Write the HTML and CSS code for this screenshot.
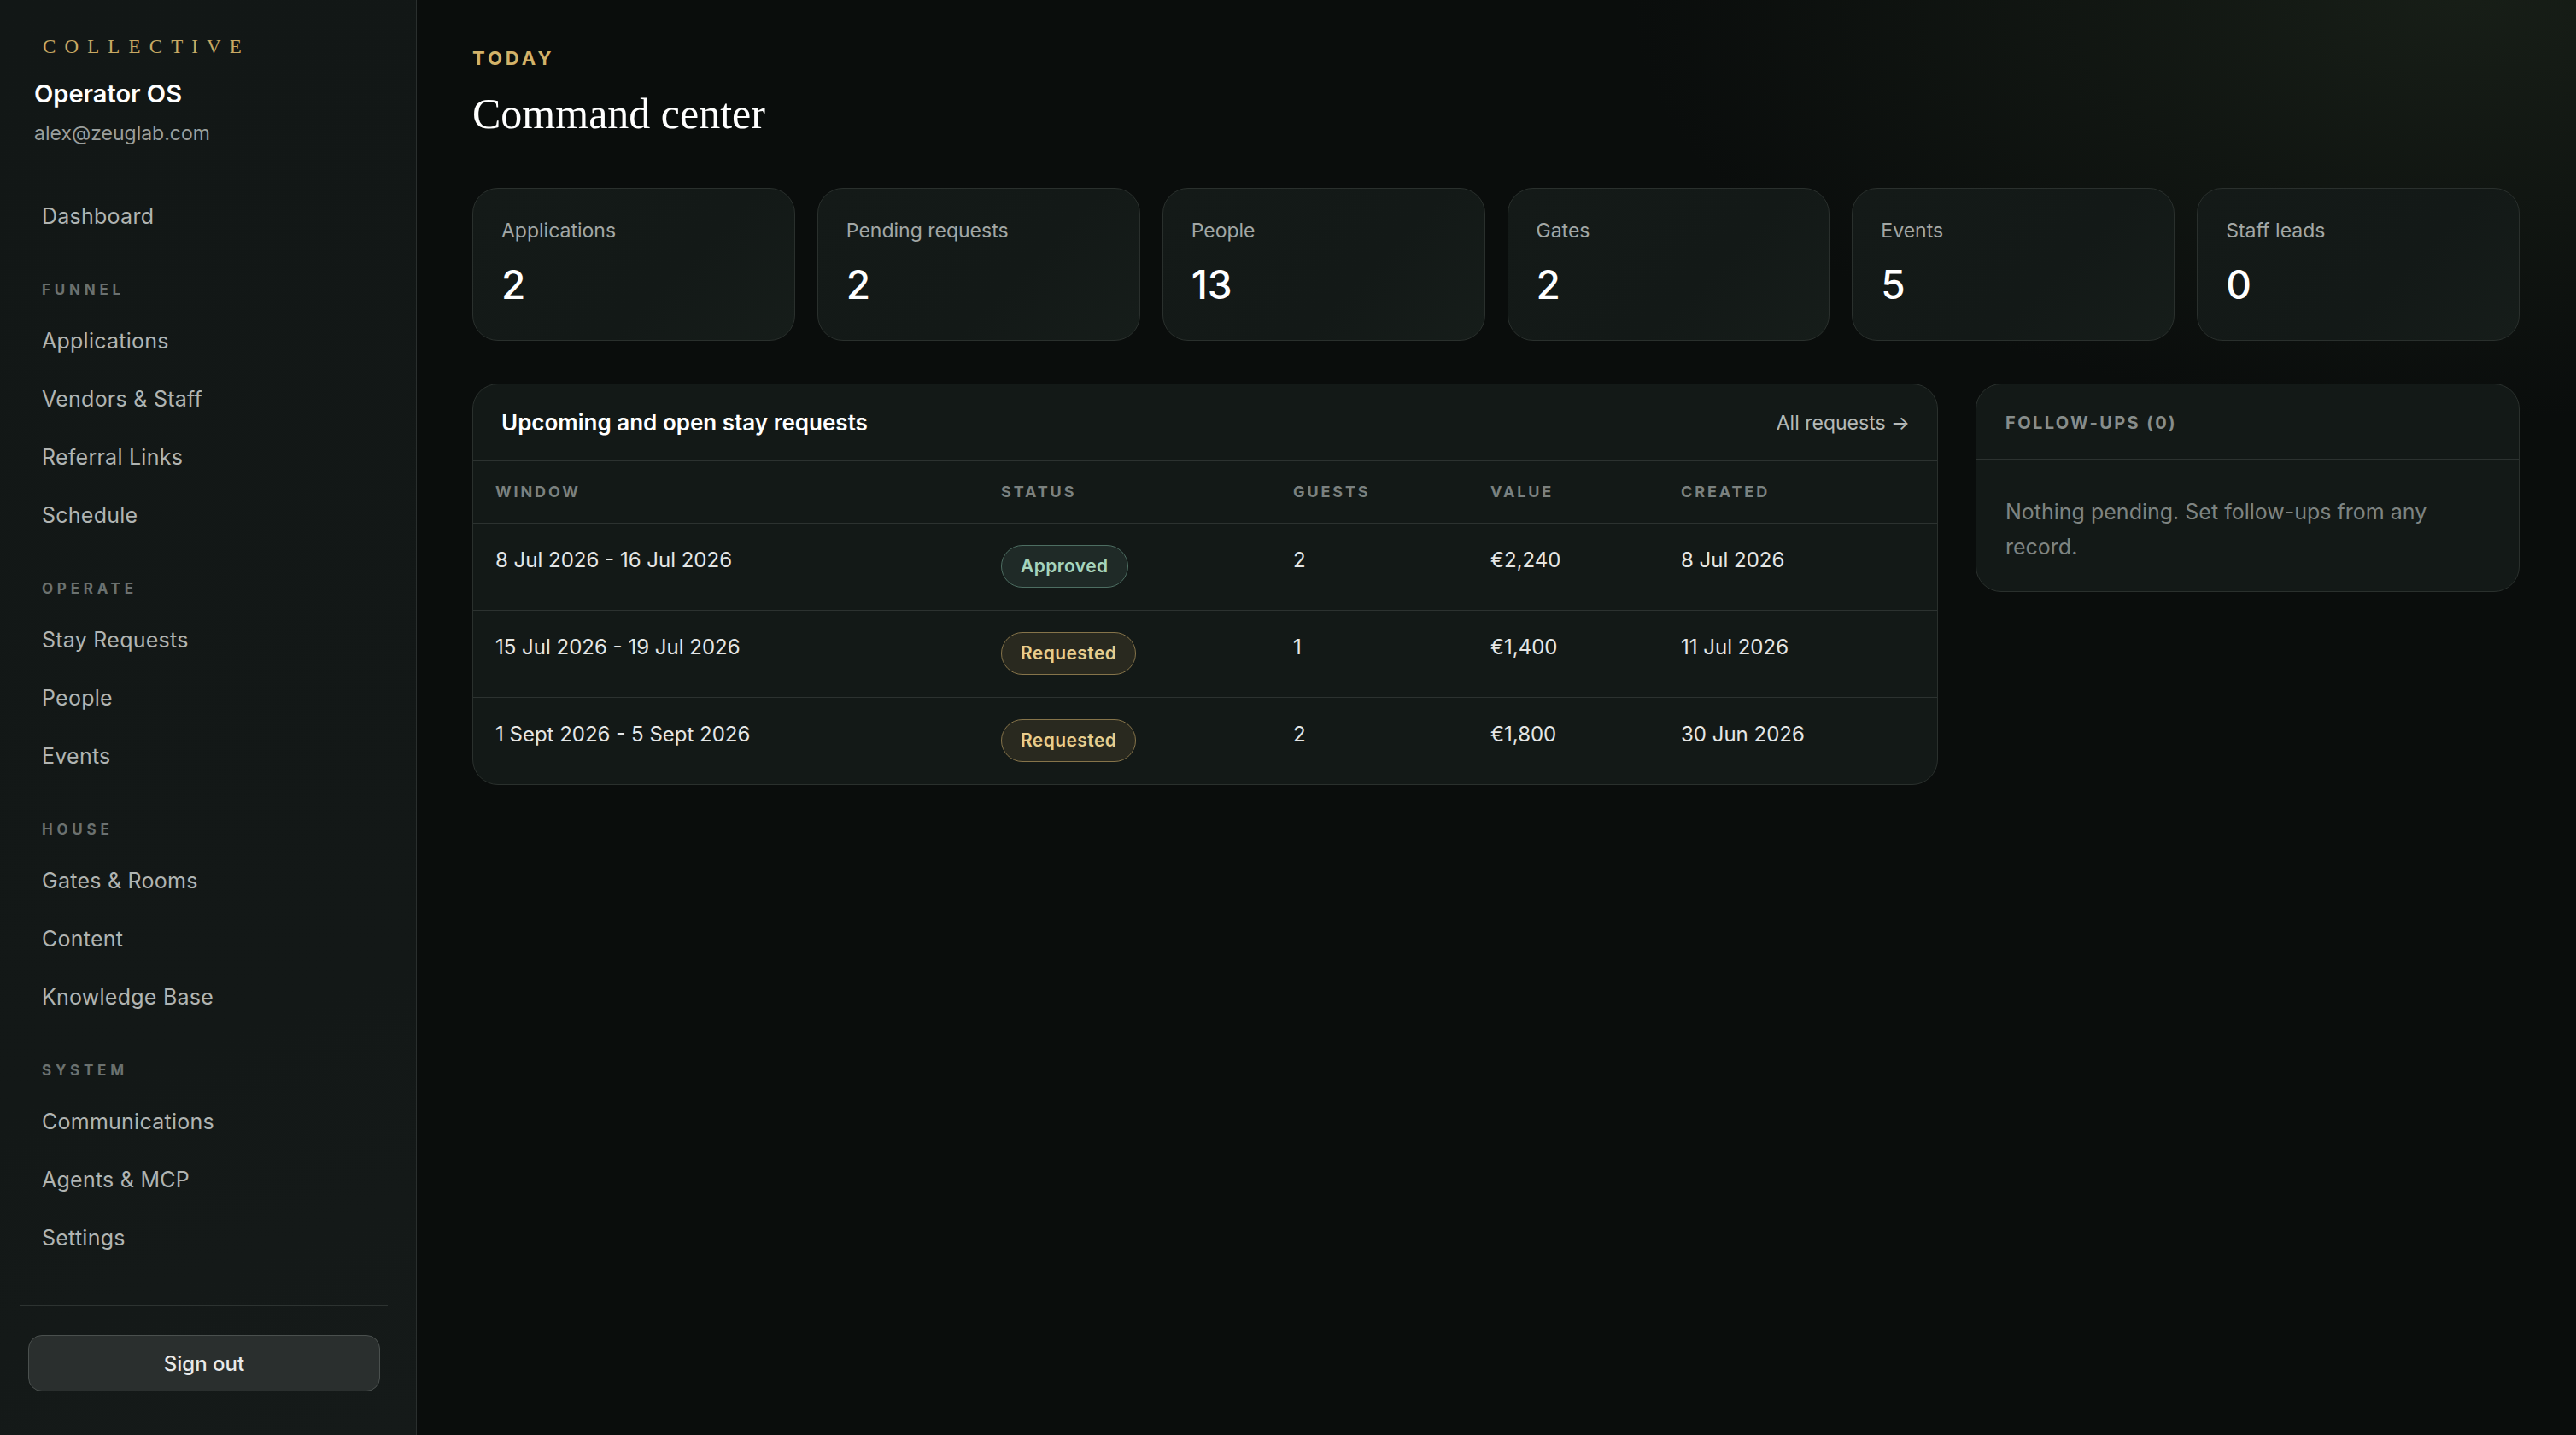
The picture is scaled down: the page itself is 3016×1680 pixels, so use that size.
FILE: index.html
```html
<!DOCTYPE html>
<html lang="en">

<head>
  <meta charset="UTF-8">
  <meta name="viewport" content="width=device-width, initial-scale=1.0">
  <title>Command center · Operator OS</title>
  <link rel="stylesheet" href="styles.css">
</head>

<body>
  <div class="app">
    <!-- Sidebar -->
    <aside class="sidebar">
      <div class="brand">
        <div class="brand-mark">COLLECTIVE</div>
        <div class="brand-title">Operator OS</div>
        <div class="brand-email">alex@zeuglab.com</div>
      </div>

      <nav class="nav">
        <a class="nav-item" href="#">Dashboard</a>

        <div class="nav-label">Funnel</div>
        <a class="nav-item" href="#">Applications</a>
        <a class="nav-item" href="#">Vendors &amp; Staff</a>
        <a class="nav-item" href="#">Referral Links</a>
        <a class="nav-item" href="#">Schedule</a>

        <div class="nav-label">Operate</div>
        <a class="nav-item" href="#">Stay Requests</a>
        <a class="nav-item" href="#">People</a>
        <a class="nav-item" href="#">Events</a>

        <div class="nav-label">House</div>
        <a class="nav-item" href="#">Gates &amp; Rooms</a>
        <a class="nav-item" href="#">Content</a>
        <a class="nav-item" href="#">Knowledge Base</a>

        <div class="nav-label">System</div>
        <a class="nav-item" href="#">Communications</a>
        <a class="nav-item" href="#">Agents &amp; MCP</a>
        <a class="nav-item" href="#">Settings</a>
      </nav>

      <div class="sidebar-footer">
        <button class="btn-signout">Sign out</button>
      </div>
    </aside>

    <!-- Main -->
    <main class="main">
      <div class="eyebrow">Today</div>
      <h1 class="page-title">Command center</h1>

      <div class="stats">
        <div class="stat-card">
          <div class="stat-label">Applications</div>
          <div class="stat-value">2</div>
        </div>
        <div class="stat-card">
          <div class="stat-label">Pending requests</div>
          <div class="stat-value">2</div>
        </div>
        <div class="stat-card">
          <div class="stat-label">People</div>
          <div class="stat-value">13</div>
        </div>
        <div class="stat-card">
          <div class="stat-label">Gates</div>
          <div class="stat-value">2</div>
        </div>
        <div class="stat-card">
          <div class="stat-label">Events</div>
          <div class="stat-value">5</div>
        </div>
        <div class="stat-card">
          <div class="stat-label">Staff leads</div>
          <div class="stat-value">0</div>
        </div>
      </div>

      <div class="board">
        <section class="panel">
          <div class="panel-head">
            <h2 class="panel-title">Upcoming and open stay requests</h2>
            <a class="panel-link" href="#">All requests &rarr;</a>
          </div>
          <table class="requests">
            <colgroup>
              <col class="col-window">
              <col class="col-status">
              <col class="col-guests">
              <col class="col-value">
              <col>
            </colgroup>
            <thead>
              <tr>
                <th>Window</th>
                <th>Status</th>
                <th>Guests</th>
                <th>Value</th>
                <th>Created</th>
              </tr>
            </thead>
            <tbody>
              <tr>
                <td>8 Jul 2026 - 16 Jul 2026</td>
                <td><span class="badge badge-approved">Approved</span></td>
                <td>2</td>
                <td>€2,240</td>
                <td>8 Jul 2026</td>
              </tr>
              <tr>
                <td>15 Jul 2026 - 19 Jul 2026</td>
                <td><span class="badge badge-requested">Requested</span></td>
                <td>1</td>
                <td>€1,400</td>
                <td>11 Jul 2026</td>
              </tr>
              <tr>
                <td>1 Sept 2026 - 5 Sept 2026</td>
                <td><span class="badge badge-requested">Requested</span></td>
                <td>2</td>
                <td>€1,800</td>
                <td>30 Jun 2026</td>
              </tr>
            </tbody>
          </table>
        </section>

        <section class="panel followups">
          <div class="followups-head">Follow-ups (0)</div>
          <p class="followups-empty">Nothing pending. Set follow-ups from any record.</p>
        </section>
      </div>
    </main>
  </div>
</body>

</html>
```

FILE: styles.css
```css
* {
  box-sizing: border-box;
}

body {
  margin: 0;
  font-family: Inter, "Noto Sans", sans-serif;
  background: #0a0d0c;
  color: #e4e6e5;
}

a {
  text-decoration: none;
  color: inherit;
}

.app {
  display: flex;
  min-height: 100vh;
}

/* ---------- sidebar ---------- */

.sidebar {
  width: 488px;
  flex-shrink: 0;
  height: 100vh;
  display: flex;
  flex-direction: column;
  padding: 44px 33px 0 24px;
  background: linear-gradient(160deg, #121716 0%, #131817 70%, #151a19 100%);
  border-right: 1px solid #2a2f2e;
}

.brand {
  padding: 0 16px;
}

.brand-mark {
  padding-left: 10px;
  font-family: "Liberation Serif", serif;
  font-size: 23px;
  line-height: 22px;
  letter-spacing: 0.44em;
  color: #c8a963;
}

.brand-title {
  margin-top: 27px;
  font-size: 29px;
  line-height: 34px;
  font-weight: 600;
  color: #fff;
}

.brand-email {
  margin-top: 14px;
  font-size: 23px;
  line-height: 30px;
  color: #9a9f9d;
}

.nav {
  margin-top: 48px;
  display: flex;
  flex-direction: column;
}

.nav-item {
  height: 68px;
  line-height: 68px;
  padding-left: 25px;
  font-size: 25px;
  letter-spacing: 0.01em;
  color: #b0b4b2;
}

.nav-label {
  height: 28px;
  line-height: 28px;
  margin: 38px 0 12px;
  padding-left: 25px;
  font-size: 17px;
  font-weight: 700;
  letter-spacing: 0.28em;
  text-transform: uppercase;
  color: #6b716f;
}

.sidebar-footer {
  margin-top: auto;
  padding: 34px 9px 51px;
  border-top: 1px solid #2d3331;
}

.btn-signout {
  width: 100%;
  height: 66px;
  border-radius: 16px;
  border: 1px solid #4a504e;
  background: #2a2f2e;
  color: #e8eaea;
  font-family: inherit;
  font-size: 24px;
  font-weight: 500;
  cursor: pointer;
}

/* ---------- main ---------- */

.main {
  flex: 1;
  padding: 54px 66px 0 65px;
  background:
    radial-gradient(ellipse 1400px 700px at 95% 0%, rgba(34, 44, 32, 0.55), transparent 70%),
    #0a0d0c;
}

.eyebrow {
  font-size: 22px;
  line-height: 28px;
  font-weight: 700;
  letter-spacing: 0.18em;
  text-transform: uppercase;
  color: #d2b269;
}

.page-title {
  margin: 21px 0 0;
  font-family: "Liberation Serif", serif;
  font-size: 50px;
  line-height: 60px;
  font-weight: 400;
  color: #fff;
}

.stats {
  margin-top: 57px;
  display: grid;
  grid-template-columns: repeat(6, 1fr);
  gap: 26px;
}

.stat-card {
  height: 179px;
  padding: 34px 33px 0;
  border: 1px solid #2a302d;
  border-radius: 30px;
  background: linear-gradient(135deg, #141a18 0%, #131917 60%, #161d1a 100%);
}

.stat-label {
  font-size: 23px;
  line-height: 30px;
  color: #a2a7a5;
}

.stat-value {
  margin-top: 22px;
  font-size: 46px;
  line-height: 52px;
  font-weight: 500;
  color: #fff;
}

.board {
  margin-top: 50px;
  display: grid;
  grid-template-columns: 1fr 637px;
  gap: 44px;
  align-items: start;
}

.panel {
  border: 1px solid #2a302d;
  border-radius: 30px;
  background: #131917;
  overflow: hidden;
}

.panel-head {
  height: 90px;
  display: flex;
  align-items: center;
  justify-content: space-between;
  padding: 0 32px 0 33px;
  border-bottom: 1px solid #2c3230;
}

.panel-title {
  margin: 0;
  font-size: 26px;
  font-weight: 600;
  color: #fff;
}

.panel-link {
  font-size: 23px;
  color: #b5b9b7;
}

.requests {
  width: 100%;
  border-collapse: collapse;
}

.col-window {
  width: 592px;
}

.col-status {
  width: 342px;
}

.col-guests {
  width: 231px;
}

.col-value {
  width: 223px;
}

.requests th {
  height: 72px;
  padding: 0 26px;
  text-align: left;
  vertical-align: middle;
  font-size: 18px;
  font-weight: 700;
  letter-spacing: 0.16em;
  text-transform: uppercase;
  color: #7b817f;
  border-bottom: 1px solid #2c3230;
}

.requests td {
  height: 102px;
  padding: 27px 26px 0;
  vertical-align: top;
  font-size: 24px;
  line-height: 32px;
  color: #e4e6e5;
  border-bottom: 1px solid #2c3230;
}

.requests tbody tr:last-child td {
  border-bottom: none;
}

.badge {
  display: inline-block;
  margin-top: -2px;
  height: 50px;
  line-height: 48px;
  padding: 0 22px;
  border-radius: 25px;
  border: 1px solid;
  font-size: 21px;
  font-weight: 600;
  letter-spacing: 0.02em;
}

.badge-approved {
  background: #1f2a27;
  border-color: #4d6e62;
  color: #a6d4bd;
}

.badge-requested {
  background: #29291f;
  border-color: #86744a;
  color: #e7cd8d;
}

.followups-head {
  height: 88px;
  line-height: 90px;
  padding: 0 34px;
  font-size: 20px;
  font-weight: 700;
  letter-spacing: 0.12em;
  text-transform: uppercase;
  color: #878d8b;
  border-bottom: 1px solid #2c3230;
}

.followups-empty {
  margin: 0;
  padding: 41px 34px 31px;
  font-size: 25px;
  line-height: 41px;
  color: #7e8482;
}
```
